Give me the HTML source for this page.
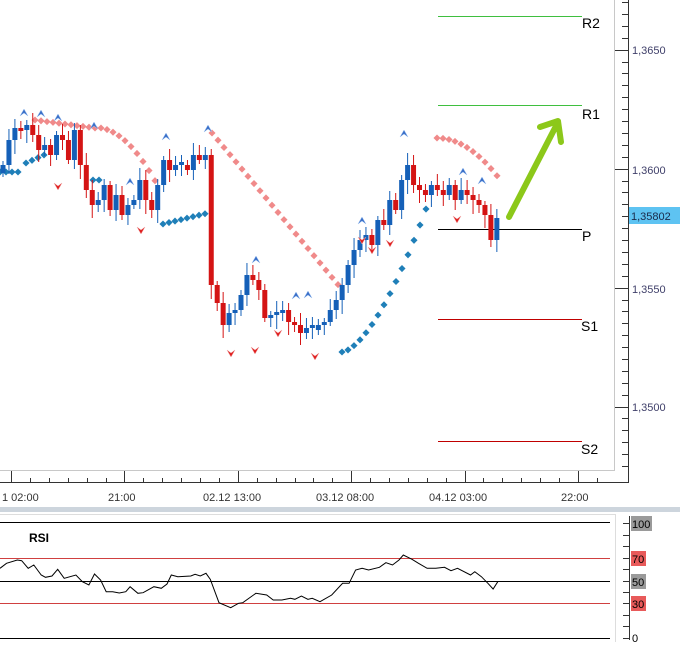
<!DOCTYPE html>
<html><head><meta charset="utf-8"><style>
html,body{margin:0;padding:0;background:#fff;}
body{width:680px;height:646px;overflow:hidden;position:relative;font-family:"Liberation Sans",sans-serif;}
svg{position:absolute;left:0;top:0;}
</style></head><body>
<svg id="s" width="680" height="646" xmlns="http://www.w3.org/2000/svg" font-family="Liberation Sans, sans-serif">
<rect x="0" y="0" width="680" height="646" fill="#fff"/>
<g shape-rendering="crispEdges">
<rect x="438" y="16" width="144" height="1" fill="#3fbf3f"/>
<rect x="438" y="105" width="144" height="1" fill="#3fbf3f"/>
<rect x="438" y="229" width="144" height="1" fill="#000"/>
<rect x="438" y="319" width="144" height="1" fill="#c00000"/>
<rect x="438" y="441" width="144" height="1" fill="#c00000"/>
</g>
<g font-size="14" fill="#000">
<text x="582" y="28">R2</text><text x="582" y="119">R1</text><text x="582" y="241">P</text><text x="581" y="331">S1</text><text x="581" y="454">S2</text>
</g>
<g id="chart"></g>
<g stroke="#8cc81a" stroke-width="6" stroke-linecap="round" fill="none" stroke-linejoin="round">
<line x1="509" y1="217" x2="556" y2="126"/>
<polyline points="540,127 558,121 561,142"/>
</g>
<line x1="614.5" y1="0" x2="614.5" y2="471" stroke="#c8c8c8"/>
<line x1="0" y1="470.5" x2="614" y2="470.5" stroke="#c8c8c8"/>
<line x1="628.5" y1="0" x2="628.5" y2="483" stroke="#333"/>
<line x1="0" y1="482.5" x2="629" y2="482.5" stroke="#333"/>
<g id="ticks" stroke="#333"></g>
<g font-size="11" fill="#40406a">
<text x="632" y="54">1,3650</text>
<text x="632" y="174">1,3600</text>
<text x="632" y="293">1,3550</text>
<text x="632" y="411">1,3500</text>
</g>
<rect x="629" y="207" width="51" height="17" fill="#5ec3f2"/>
<text x="631" y="220" font-size="11" fill="#1a2a4a">1,35802</text>
<g font-size="11" fill="#333">
<text x="2" y="501">1 02:00</text>
<text x="108" y="501">21:00</text>
<text x="203" y="501">02.12 13:00</text>
<text x="316" y="501">03.12 08:00</text>
<text x="429" y="501">04.12 03:00</text>
<text x="561" y="501">22:00</text>
</g>
<rect x="0" y="507" width="680" height="5" fill="#cdd5dd"/>
<line x1="0" y1="514.5" x2="615" y2="514.5" stroke="#ddd"/>
<line x1="0" y1="522.5" x2="610" y2="522.5" stroke="#000"/>
<line x1="0" y1="638.5" x2="610" y2="638.5" stroke="#000"/>
<line x1="0" y1="558.5" x2="610" y2="558.5" stroke="#d04040"/>
<line x1="0" y1="581.5" x2="610" y2="581.5" stroke="#000"/>
<line x1="0" y1="603.5" x2="610" y2="603.5" stroke="#d04040"/>
<line x1="615.5" y1="514" x2="615.5" y2="642" stroke="#ddd"/>
<line x1="629.5" y1="516" x2="629.5" y2="640" stroke="#333"/>
<g id="rticks" stroke="#333"></g>
<text x="29" y="542" font-size="12" font-weight="bold" fill="#000">RSI</text>
<polyline id="rsi" fill="none" stroke="#000" stroke-width="1"/>
<rect x="631" y="516" width="21" height="15" fill="#9a9a9a"/><text x="632" y="528" font-size="11">100</text>
<rect x="631" y="551" width="15" height="15" fill="#e85a5a"/><text x="632" y="563" font-size="11">70</text>
<rect x="631" y="574" width="15" height="15" fill="#9a9a9a"/><text x="632" y="586" font-size="11">50</text>
<rect x="631" y="596" width="15" height="15" fill="#e85a5a"/><text x="632" y="608" font-size="11">30</text>
<text x="632" y="642" font-size="11">0</text>
</svg>
<script>
(function(){
var NS="http://www.w3.org/2000/svg";
function el(p,t,a){var e=document.createElementNS(NS,t);for(var k in a)e.setAttribute(k,a[k]);p.appendChild(e);return e;}
var ch=document.getElementById('chart');
var C=[165,140,128,130,125,135,150,145,155,135,140,160,130,165,190,205,200,185,210,195,215,205,200,180,200,210,185,160,170,165,
165,170,155,160,155,285,
303,325,313,310,295,275,280,290,318,315,313,310,322,325,333,328,330,325,322,310,300,285,265,250,
240,235,245,220,225,200,210,180,165,185,190,195,185,190,195,185,200,190,195,200,205,215,240,218];
function dots(x0,x1,f,col){for(var x=x0;x<=x1;x+=6){var t=(x-x0)/Math.max(1,x1-x0);var yy=f(t);el(ch,'rect',{x:x-2.5,y:yy-2.5,width:5,height:5,fill:col,transform:'rotate(45 '+x+' '+yy+')'});}}
var pk="#f08a8a",bl="#1f7fb8";
dots(35,95,function(t){return 120+t*8;},pk);
dots(101,160,function(t){return 128+t*t*52+t*10;},pk);
dots(212,340,function(t){return 133+t*154;},pk);
dots(437,498,function(t){return 138+t*t*39;},pk);
dots(0,20,function(t){return 172;},bl);
dots(26,44,function(t){return 163-t*8;},bl);
dots(93,100,function(t){return 180;},bl);
dots(163,208,function(t){return 224-t*11;},bl);
dots(342,430,function(t){return 352-Math.pow(t,1.6)*154;},bl);
var sp=5.95,prev=C[0]+8;
for(var i=0;i<C.length;i++){
 var x=3+i*sp,o=prev,c=C[i];
 if(Math.abs(o-c)<3){c=o+(i%2?3:-3);}
 var up=c<o,col=up?"#1560b8":"#d41414";
 var bt=Math.min(o,c),bb=Math.max(o,c);
 var hi=bt-4-(i*7%9),lo=bb+4+(i*5%11);
 el(ch,'line',{x1:x,y1:hi,x2:x,y2:lo,stroke:col,'stroke-width':1});
 el(ch,'rect',{x:x-2.5,y:bt,width:5,height:bb-bt,fill:col});
 prev=C[i];
}
function upm(x,y){el(ch,'path',{d:'M'+(x-4)+' '+(y+4)+' L'+x+' '+(y-3)+' L'+(x+4)+' '+(y+4)+' L'+x+' '+(y+1)+' Z',fill:'#3a6fc8',stroke:'#9cc0f0','stroke-width':0.5});}
function dnm(x,y){el(ch,'path',{d:'M'+(x-4)+' '+(y-3)+' L'+x+' '+(y+4)+' L'+(x+4)+' '+(y-3)+' L'+x+' '+(y)+' Z',fill:'#e02020',stroke:'#f0a0a0','stroke-width':0.5});}
[[24,112],[41,113],[58,117],[94,125],[166,136],[208,128],[256,259],[308,294],[404,133],[463,171],[482,180],[130,181],[362,220],[296,295]].forEach(function(p){upm(p[0],p[1]);});
[[58,186],[141,230],[231,353],[255,350],[278,333],[315,356],[372,250],[390,243],[457,219],[362,240]].forEach(function(p){dnm(p[0],p[1]);});
var tk=document.getElementById('ticks');
for(var y=2;y<471;y+=11.9){var m=((y-50)%119+119)%119;var maj=m<3||m>116;el(tk,'line',{x1:maj?615:622,y1:Math.round(y)+0.5,x2:629,y2:Math.round(y)+0.5});}
for(var x2=11;x2<615;x2+=18.9){var k=Math.round((x2-11)/18.9);var mj=k%6==0;el(tk,'line',{x1:Math.round(x2)+0.5,y1:mj?471:478,x2:Math.round(x2)+0.5,y2:483});}
var rt=document.getElementById('rticks');
[523,535,546,558,569,581,592,603,615,626,638].forEach(function(y){el(rt,'line',{x1:623,y1:y+0.5,x2:630,y2:y+0.5});});
var R=[[0,325],[15,310],[40,300],[50,302],[65,325],[78,315],[95,345],[105,352],[120,348],[133,328],[148,355],[175,345],[190,365],[205,375],[218,342],[232,360],[245,395],[260,395],[275,399],[290,395],[300,380],[318,400],[330,398],[355,380],[372,385],[385,372],[395,345],[410,350],[440,348],[450,343],[462,348],[475,340],[485,358],[505,428],[532,443],[550,430],[560,428],[590,400],[615,405],[630,420],[650,420],[670,415],[680,418],[695,408],[710,418],[720,415],[738,425],[765,405],[790,370],[805,370],[820,330],[835,325],[850,330],[875,322],[890,308],[905,315],[920,300],[930,285],[950,298],[965,310],[985,325],[1005,325],[1025,322],[1040,332],[1055,325],[1085,345],[1095,335],[1110,350],[1125,370],[1137,387],[1148,365]];
document.getElementById('rsi').setAttribute('points',R.map(function(p){return (p[0]/2.306).toFixed(1)+','+(p[1]/3+460).toFixed(1);}).join(' '));
})();
</script>
</body></html>
